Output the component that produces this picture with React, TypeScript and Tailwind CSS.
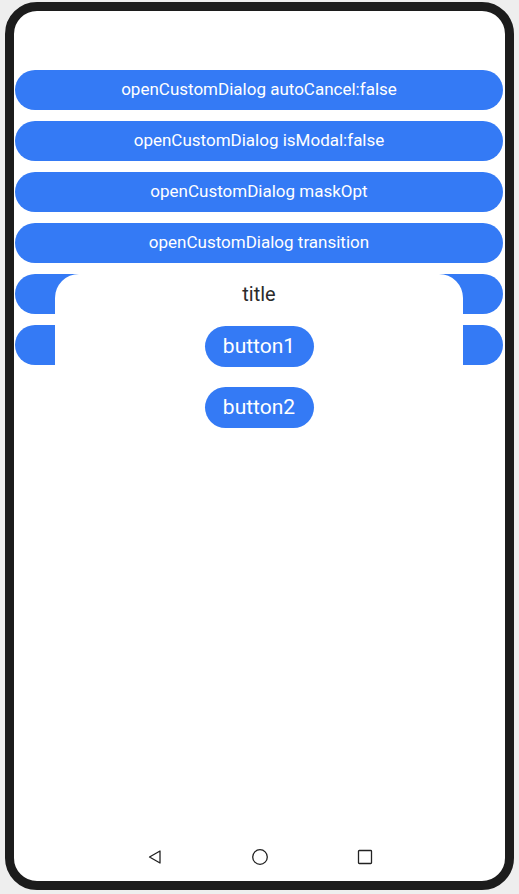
import React from 'react';

// the last two buttons sit under the dialog, their labels are not visible
const labels = [
  'openCustomDialog autoCancel:false',
  'openCustomDialog isModal:false',
  'openCustomDialog maskOpt',
  'openCustomDialog transition',
  '',
  '',
];

export default function App() {
  return (
    <div className="w-[519px] h-[894px] bg-[#eeeeee] pt-[2px] pl-[5px]" style={{ fontFamily: 'Roboto, "Noto Sans", sans-serif' }}>
      <div className="relative w-[509px] h-[888px] rounded-[32px] border-[9px] border-[#1c1c1c] bg-white overflow-hidden">
        <div className="flex flex-col gap-[11px] pt-[59px] pl-[1px] pr-[2px]">
          {labels.map((l, i) => (
            <button
              key={i}
              className="h-10 w-full rounded-full bg-[#347af5] text-white text-[17px] flex items-center justify-center"
            >
              {l}
            </button>
          ))}
        </div>

        {/* dialog */}
        <div className="absolute left-[41px] top-[263px] w-[408px] h-[180px] bg-white rounded-t-[24px] flex flex-col items-center pt-[6px]">
          <div className="h-[28px] leading-[28px] text-[20px] text-[#2b2b2b]">title</div>
          <button className="mt-[18px] h-[41px] w-[109px] rounded-full bg-[#347af5] text-white text-[21px] flex items-center justify-center">
            button1
          </button>
          <button className="mt-[20px] h-[41px] w-[109px] rounded-full bg-[#347af5] text-white text-[21px] flex items-center justify-center">
            button2
          </button>
        </div>

        {/* nav bar */}
        <div className="absolute left-0 right-0 bottom-[15px] flex justify-center items-center gap-[88px]">
          <svg width="16" height="16" viewBox="0 0 16 16" fill="none" stroke="#222" strokeWidth="1.3">
            <path d="M2.5 8 L13 2 L13 14 Z" strokeLinejoin="round" />
          </svg>
          <svg width="18" height="18" viewBox="0 0 18 18" fill="none" stroke="#222" strokeWidth="1.3">
            <circle cx="9" cy="9" r="7.3" />
          </svg>
          <svg width="16" height="16" viewBox="0 0 16 16" fill="none" stroke="#222" strokeWidth="1.3">
            <rect x="1.5" y="1.5" width="13" height="13" rx="0.8" />
          </svg>
        </div>
      </div>
    </div>
  );
}
